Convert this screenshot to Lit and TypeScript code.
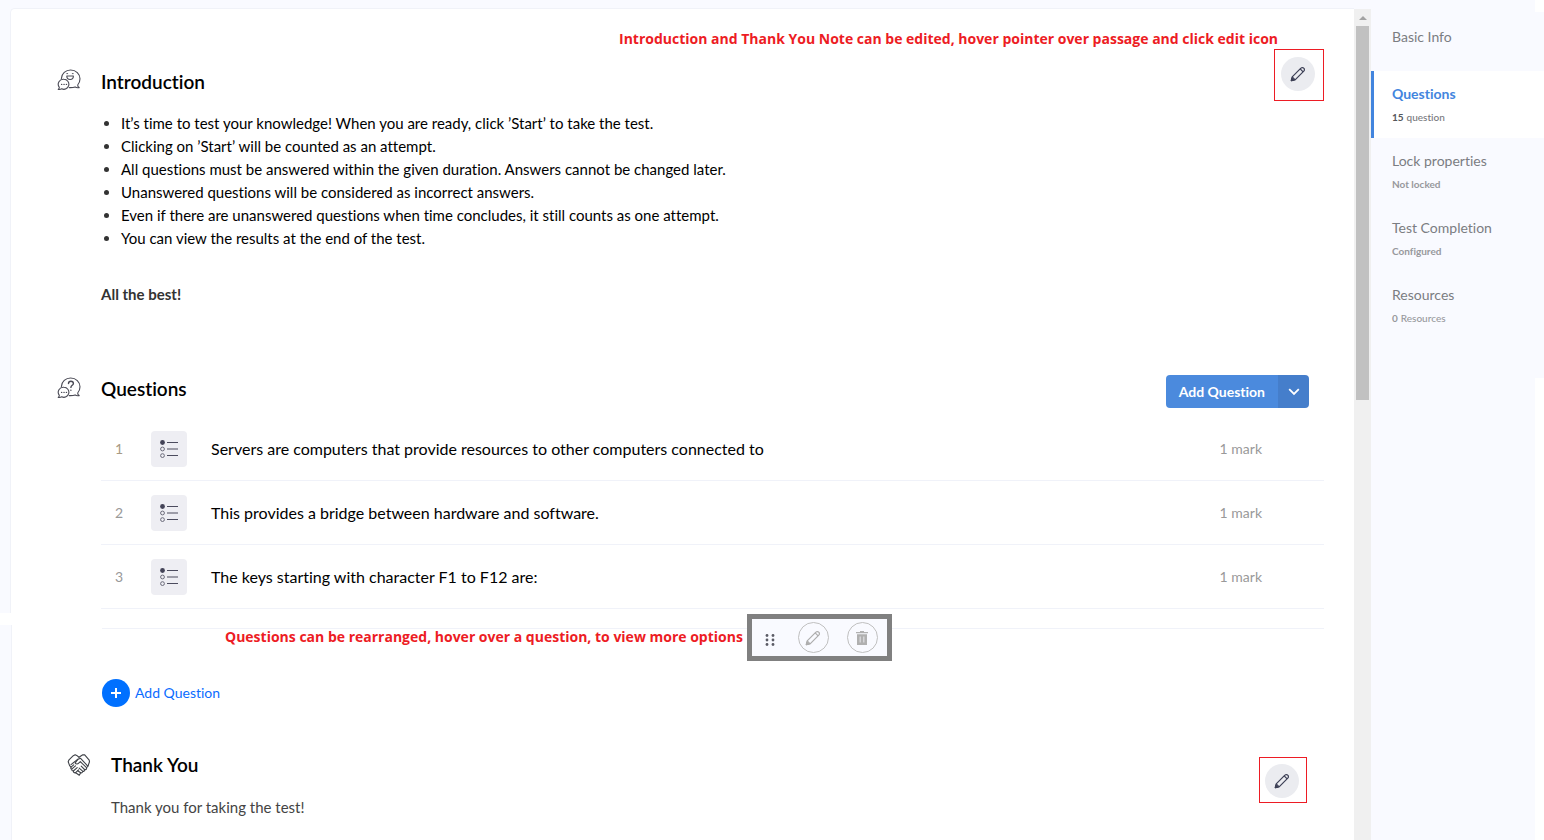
import { LitElement, html, css, svg, nothing } from "lit";
import { customElement } from "lit/decorators.js";
import { classMap } from "lit/directives/class-map.js";

const pencil = html`<svg viewBox="0 0 16 16" width="16" height="16" fill="none" stroke="currentColor" stroke-width="1.2" stroke-linejoin="round" aria-hidden="true">
  <path d="M1.300 14.700 2.200 10.900 10.900 2.200a2 2 0 0 1 2.900 0 2 2 0 0 1 0 2.900L5.100 13.800Z" />
  <path d="M10.200 2.900 13.100 5.800M2.200 10.900 5.100 13.800" />
  <path d="M1.300 14.700 1.900 12.200 3.800 14.100Z" fill="currentColor" />
</svg>`;

const bubbles = (inner: unknown) => html`<svg viewBox="0 0 24 22" width="24" height="22" fill="none" stroke="#4a4a55" stroke-width="1.1" stroke-linecap="round" stroke-linejoin="round" aria-hidden="true">
  <path d="M4.400 9.600C4.600 4.600 8.700 1 13.600 1 19 1 23 5 23 9.800c0 2.400-.8 4.500-2.300 6.200-.1 1.100.4 2 1.500 2.600-1.500.4-3 .1-4.100-.7-1.400.6-2.800.8-5.800.7" />
  <path d="M7 10.300a5 5 0 1 1-2.300 9.500c-.9.600-2 .8-3.500.6.8-.6 1.200-1.300 1.100-2.100A5 5 0 0 1 7 10.300Z" />
  <path d="M4.600 15.400h.1M7 15.400h.1M9.400 15.400h.1" stroke-width="1.400" />
  ${inner}
</svg>`;

const smile = svg`<path d="M9.800 7h6.600c0 2.200-1.400 3.500-3.300 3.500S9.800 9.200 9.800 7Z" /><path d="M9.800 4.600h.9M15.300 4.600h.9" stroke-width="0.900" />`;
const question = svg`<path d="M11.500 6.600c0-1.500 1-2.400 2.400-2.400s2.500.9 2.500 2.200c0 1.900-2.500 1.900-2.500 4M13.900 13.100v.2" stroke-width="1.400" />`;

const handshake = html`<svg viewBox="0 0 24 24" width="24" height="24" fill="none" stroke="#3f4248" stroke-width="1.1" stroke-linecap="round" stroke-linejoin="round" aria-hidden="true">
  <path d="M12 4.200 9.700 2.400 8.200 1.700 6.300 2.700 2 6.800 1.200 8.700 2.600 12.600 4 14.200" />
  <path d="M12 4.200 15.800 1.700 17.700 1.900 22.200 7.200 22.500 8.800 21 13 19.800 14.500" />
  <path d="M4 11.600 10.900 6.300 13.600 5.300 19.900 12.200 21 13" />
  <path d="M10.900 6.300 8.200 10c.8 1.300 2.400 1.300 3.500.2l1.600-1.500 6.200 6c.5 1.200-.7 2.400-2 1.800" />
  <path d="M14.200 13.200 17.500 16.500c.4 1.200-.8 2.300-1.900 1.700M12.200 15.200 15.600 18.200c.2 1.200-.9 2.100-1.900 1.500M10.700 17.700 13.700 19.700 12.300 22.200 8.700 19.700" />
  <path d="M4 14.200 6.700 11.900M4.700 16.200 8.500 12.900M6.300 18 10.200 14.600M8.300 19.900 11.600 16.900M4 14.200c-.5 1 0 1.900.7 2M4.700 16.200c0 1.100.7 1.800 1.600 1.800M6.300 18c0 1.200.9 1.900 2 1.900" />
</svg>`;

const choiceList = html`<svg viewBox="0 0 18 18" width="18" height="18" fill="none" aria-hidden="true">
  <circle cx="2.500" cy="2.500" r="2.400" fill="#434357" />
  <circle cx="2.500" cy="9" r="1.900" stroke="#6b6b7a" />
  <circle cx="2.500" cy="15.600" r="1.900" stroke="#6b6b7a" />
  <path d="M7 2.500h11M7 9h11M7 15.500h11" stroke="#4c4c5e" stroke-width="1.200" />
</svg>`;

const chevron = html`<svg viewBox="0 0 12 8" width="12" height="8" fill="none" stroke="#fff" stroke-width="1.800" aria-hidden="true"><path d="M1.200 1.200 6 6 10.800 1.200" /></svg>`;
const plus = html`<svg viewBox="0 0 12 12" width="12" height="12" stroke="#fff" stroke-width="2" aria-hidden="true"><path d="M6 1v10M1 6h10" /></svg>`;
const grip = html`<svg viewBox="0 0 10 12" width="10" height="12" fill="#5b5c66" aria-hidden="true">
  ${[1.5, 6, 10.5].map((y) => svg`<circle cx="2" cy=${y} r="1.400" /><circle cx="8" cy=${y} r="1.400" />`)}
</svg>`;
const trash = html`<svg viewBox="0 0 12 14" width="12" height="14" fill="#b0b0b0" aria-hidden="true">
  <path d="M4 0h4v1h4v1.200H0V1h4ZM1 3.200h10V14H1Z" /><path d="M4.200 5.500v6M7.800 5.500v6" stroke="#dedee2" stroke-width="1.200" />
</svg>`;

const RULES = [
  "It’s time to test your knowledge! When you are ready, click ’Start’ to take the test.",
  "Clicking on ’Start’ will be counted as an attempt.",
  "All questions must be answered within the given duration. Answers cannot be changed later.",
  "Unanswered questions will be considered as incorrect answers.",
  "Even if there are unanswered questions when time concludes, it still counts as one attempt.",
  "You can view the results at the end of the test.",
];

const QUESTIONS = [
  "Servers are computers that provide resources to other computers connected to",
  "This provides a bridge between hardware and software.",
  "The keys starting with character F1 to F12 are:",
];

const STEPS = [
  { title: "Basic Info" },
  { title: "Questions", count: "15", sub: "question", active: true },
  { title: "Lock properties", sub: "Not locked" },
  { title: "Test Completion", sub: "Configured" },
  { title: "Resources", count: "0", sub: "Resources" },
];

@customElement("step-nav")
class StepNav extends LitElement {
  static styles = css`
    :host { display: block; padding-top: 14px; }
    .step {
      display: block; box-sizing: border-box; min-height: 57px;
      padding: 12px 8px 9px 18px; border-left: 3px solid transparent;
      color: #7b7d82; text-decoration: none;
    }
    .title { display: block; font-size: 14px; line-height: 22px; font-weight: 400; }
    .sub { display: block; font-size: 10px; line-height: 24px; font-weight: 700; color: #97989c; }
    .sub b { font-weight: 700; margin-right: 3px; }
    .counted { font-weight: 500; }
    .active { background: #fff; border-left-color: #4285de; }
    .active .title { color: #4285de; font-weight: 700; }
    .active .sub { color: #77787c; }
    .active b { color: #55565a; }
  `;
  render() {
    return html`<nav aria-label="Test setup">
      ${STEPS.map((s) => html`<a href="#" class=${classMap({ step: true, active: !!s.active })}>
        <span class="title">${s.title}</span>
        ${s.sub ? html`<span class=${classMap({ sub: true, counted: !!s.count })}>${s.count ? html`<b>${s.count}</b>` : nothing}${s.sub}</span>` : nothing}
      </a>`)}
    </nav>`;
  }
}

@customElement("app-root")
class AppRoot extends LitElement {
  static styles = css`
    :host {
      display: flex; min-height: 100vh; overflow: hidden;
      font-family: Lato, sans-serif; font-variant-ligatures: none; color: #000;
      background:
        linear-gradient(#fff, #fff) right 0 top 0 / 9px 12px no-repeat,
        linear-gradient(#fff, #fff) right 0 top 378px / 9px 100% no-repeat,
        #f9faff;
    }
    h2, p, ul, ol { margin: 0; padding: 0; }
    button { font-family: inherit; font-variant-ligatures: none; margin: 0; padding: 0; border: 0; cursor: pointer; }
    .main { flex: 1; min-width: 0; display: flex; flex-direction: column; padding-top: 8px; }
    .card { background: #fff; border-left: 1px solid #f0f2f8; padding: 0 30px 0 45px; }
    .upper { margin-left: 10px; border-top: 1px solid #f0f2f8; border-top-left-radius: 5px; padding: 20px 30px 4px 46px; }
    .seam { height: 12px; background: #fff; }
    .lower { margin-left: 11px; flex: 1; padding-top: 3px; }
    .track { width: 17px; margin-top: 9px; background: #f0f0f0; display: flex; flex-direction: column; align-items: center; }
    .up { height: 17px; display: flex; align-items: center; }
    .thumb { width: 13px; height: 374px; background: #c1c1c1; }
    .side { width: 173px; }

    .note { font-family: "Open Sans", sans-serif; font-size: 14px; line-height: 20px; font-weight: 700; color: #ed1c24; white-space: nowrap; }
    .note-top { text-align: right; margin-right: 46px; }
    .head { display: flex; align-items: flex-start; }
    .head h2 { flex: 1; font-size: 19px; line-height: 24px; font-weight: 600; }
    .ico { flex: none; width: 44px; display: flex; }
    .body { padding-left: 44px; }
    .intro h2 { margin-top: 21px; }
    .intro .ico { margin-top: 20px; }
    .callout { box-sizing: border-box; width: 50px; height: 52px; border: 1px solid #ed1c24; padding: 7px 6px; }
    .edit { width: 34px; height: 34px; border-radius: 50%; background: #ebecf0; color: #3c3f55; display: grid; place-items: center; }
    .rules { list-style: none; font-size: 15px; line-height: 23px; margin-top: 11px; }
    .rules li { display: flex; align-items: center; gap: 12px; }
    .rules li::before { content: ""; flex: none; width: 5px; height: 5px; margin-left: 3px; border-radius: 50%; background: #333; }
    .best { font-size: 15px; line-height: 23px; font-weight: 700; color: #333; margin-top: 33px; }

    .quiz { margin-top: 69px; }
    .quiz h2 { margin-top: 2px; }
    .quiz .ico { margin-top: 2px; }
    .split { display: flex; margin-right: 15px; border-radius: 4px; overflow: hidden; }
    .split button { height: 33px; background: #4b8add; color: #fff; font-size: 14px; font-weight: 700; padding: 0 13px; }
    .split .more { background: #457ecb; padding: 0 10px; width: 31px; display: grid; place-items: center; }
    .list { list-style: none; margin-top: 9px; padding-left: 44px; }
    .row { display: flex; align-items: center; height: 63px; border-bottom: 1px solid #f0f2f9; font-size: 16px; }
    .num { width: 36px; text-align: center; font-size: 14px; color: #999; margin-right: 14px; }
    .row:first-child .num { color: #a89a84; }
    .kind { width: 36px; height: 36px; border-radius: 4px; background: #eeeef3; display: grid; place-items: center; margin-right: 24px; }
    .text { flex: 1; }
    .mark { font-size: 14px; color: #999; margin-right: 62px; }

    .rule { border-top: 1px solid #f0f2f9; margin-left: 45px; }
    .tip { display: flex; padding-left: 168px; margin-top: -2px; }
    .tip .anchor { position: relative; }
    .tools {
      position: absolute; left: 100%; top: -13px; margin-left: 4px; box-sizing: border-box;
      width: 145px; height: 47px; border: 5px solid #808080; background: #f9faff;
      display: flex; align-items: center; padding-left: 13px;
    }
    .tools button { background: none; display: grid; place-items: center; }
    .tools .ring { box-sizing: border-box; width: 31px; height: 31px; border: 1px solid #c0c0c0; border-radius: 50%; color: #adadad; }
    .tools .ring + .ring { margin-left: 18px; }
    .drag { margin-right: 23px; padding-top: 4px; }
    .add { display: inline-flex; align-items: center; gap: 5px; margin: 32px 0 0 45px; background: none; color: #0a6cff; font-size: 14px; line-height: 16px; }
    .disc { width: 28px; height: 28px; border-radius: 50%; background: #0070ff; display: grid; place-items: center; }
    .thanks { margin-top: 50px; padding-left: 10px; }
    .thanks h2 { margin-top: -4px; }
    .thanks .ico { margin-top: -4px; }
    .thanks .callout { width: 48px; height: 46px; padding: 6px 5px; margin-right: 17px; }
    .thanks-text { font-size: 15px; line-height: 23px; color: #444; margin-top: -7px; padding-left: 54px; }
  `;

  private edit(label: string) {
    return html`<div class="callout"><button class="edit" aria-label=${label}>${pencil}</button></div>`;
  }

  render() {
    return html`
      <main class="main">
        <div class="card upper">
          <p class="note note-top">Introduction and Thank You Note can be edited, hover pointer over passage and click edit icon</p>
          <section>
            <div class="head intro"><span class="ico">${bubbles(smile)}</span><h2>Introduction</h2>${this.edit("Edit introduction")}</div>
            <div class="body">
              <ul class="rules">${RULES.map((r) => html`<li>${r}</li>`)}</ul>
              <p class="best">All the best!</p>
            </div>
          </section>
          <section>
            <div class="head quiz"><span class="ico">${bubbles(question)}</span><h2>Questions</h2>
              <div class="split"><button>Add Question</button><button class="more" aria-label="More question types">${chevron}</button></div>
            </div>
            <ol class="list">
              ${QUESTIONS.map((q, i) => html`<li class="row"><span class="num">${i + 1}</span><span class="kind">${choiceList}</span><span class="text">${q}</span><span class="mark">1 mark</span></li>`)}
            </ol>
          </section>
        </div>
        <div class="seam"></div>
        <div class="card lower">
          <div class="rule"></div>
          <div class="tip"><div class="anchor">
            <p class="note">Questions can be rearranged, hover over a question, to view more options</p>
            <div class="tools">
              <button class="drag" aria-label="Rearrange">${grip}</button>
              <button class="ring" aria-label="Edit question">${pencil}</button>
              <button class="ring" aria-label="Delete question">${trash}</button>
            </div>
          </div></div>
          <button class="add"><span class="disc">${plus}</span>Add Question</button>
          <section>
            <div class="head thanks"><span class="ico">${handshake}</span><h2>Thank You</h2>${this.edit("Edit thank you note")}</div>
            <p class="thanks-text">Thank you for taking the test!</p>
          </section>
        </div>
      </main>
      <div class="track" aria-hidden="true">
        <div class="up"><svg viewBox="0 0 8 4" width="8" height="4" fill="#a3a3a3"><path d="M0 4 4 0 8 4Z" /></svg></div>
        <div class="thumb"></div>
      </div>
      <aside class="side"><step-nav></step-nav></aside>
    `;
  }
}
